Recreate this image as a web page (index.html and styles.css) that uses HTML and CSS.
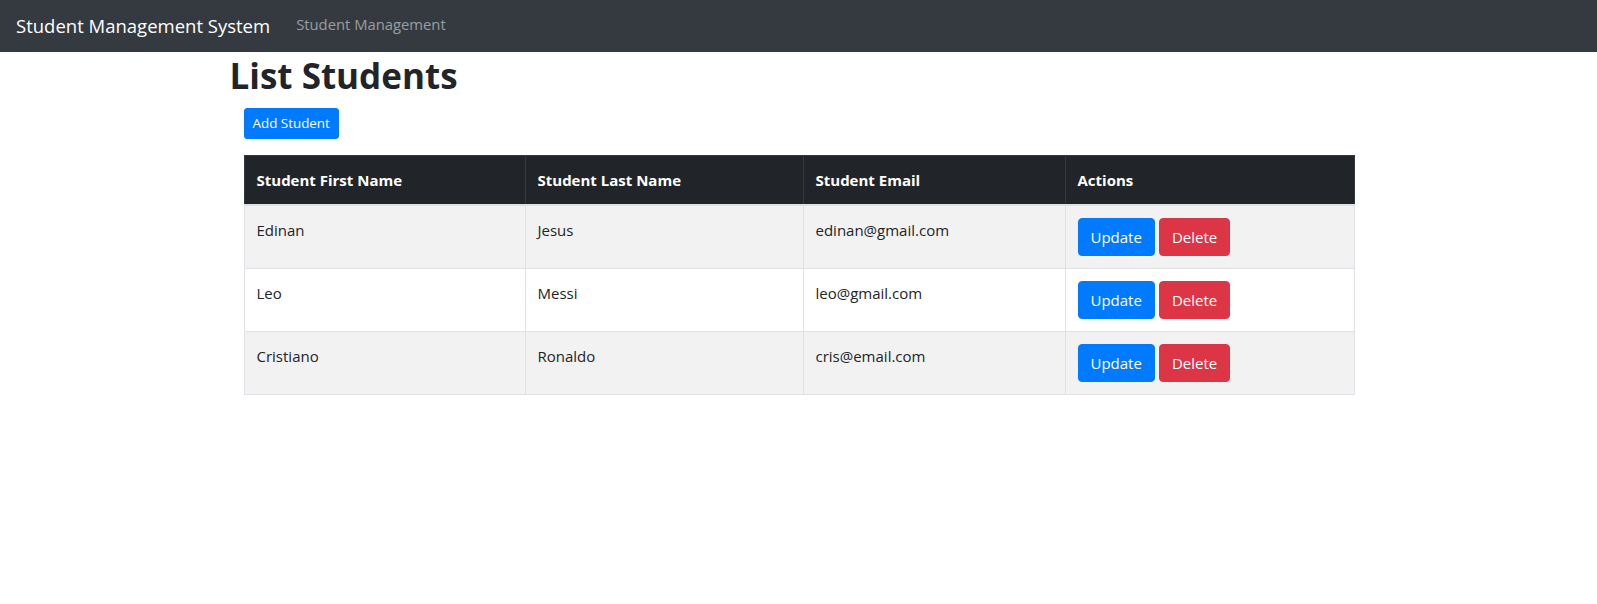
FILE: index.html
```html
<!DOCTYPE html>
<html lang="en">
<head>
<meta charset="utf-8">
<title>Student Management System</title>
<link rel="stylesheet" href="styles.css">
</head>
<body>
<header class="navbar">
  <a class="brand" href="#">Student Management System</a>
  <a class="nav-link" href="#">Student Management</a>
</header>
<main class="container">
  <h1 class="title">List Students</h1>
  <div class="content">
    <div class="toolbar">
      <button class="btn btn-sm btn-primary">Add Student</button>
    </div>
    <table class="table">
      <thead>
        <tr>
          <th class="c1">Student First Name</th>
          <th class="c2">Student Last Name</th>
          <th class="c3">Student Email</th>
          <th class="c4">Actions</th>
        </tr>
      </thead>
      <tbody>
        <tr>
          <td>Edinan</td>
          <td>Jesus</td>
          <td>edinan@gmail.com</td>
          <td><div class="actions"><button class="btn btn-primary">Update</button><button class="btn btn-danger">Delete</button></div></td>
        </tr>
        <tr>
          <td>Leo</td>
          <td>Messi</td>
          <td>leo@gmail.com</td>
          <td><div class="actions"><button class="btn btn-primary">Update</button><button class="btn btn-danger">Delete</button></div></td>
        </tr>
        <tr>
          <td>Cristiano</td>
          <td>Ronaldo</td>
          <td>cris@email.com</td>
          <td><div class="actions"><button class="btn btn-primary">Update</button><button class="btn btn-danger">Delete</button></div></td>
        </tr>
      </tbody>
    </table>
  </div>
</main>
</body>
</html>
```

FILE: styles.css
```css
* { box-sizing: border-box; }

body {
  margin: 0;
  font-family: "Open Sans", "Noto Sans", "Liberation Sans", sans-serif;
  font-size: 15px;
  line-height: 24px;
  color: #212529;
  background: #fff;
}

.navbar {
  display: flex;
  align-items: center;
  height: 52px;
  padding: 0 16px;
  background: #343a40;
}

.brand {
  font-size: 18.5px;
  line-height: 30px;
  color: #fff;
  text-decoration: none;
  margin-right: 18px;
  white-space: nowrap;
}

.nav-link {
  padding: 0 8px 5px;
  font-size: 14.8px;
  line-height: 24px;
  color: rgba(255, 255, 255, 0.5);
  text-decoration: none;
}

.container {
  width: 1140px;
  margin: 0 auto;
}

.title {
  margin: 0 0 8px;
  padding-left: 1px;
  font-size: 35px;
  line-height: 48px;
  font-weight: 700;
  color: #212529;
}

.content {
  padding: 0 15px;
}

.toolbar {
  display: flex;
  margin-bottom: 16px;
}

.btn {
  display: inline-block;
  font-family: inherit;
  font-size: 15px;
  line-height: 24px;
  padding: 6px 12px;
  border: 1px solid transparent;
  border-radius: 4px;
  color: #fff;
  cursor: pointer;
}

.btn-sm {
  font-size: 13.4px;
  line-height: 21px;
  padding: 4px 8px;
  border-radius: 3px;
}

.btn-primary { background: #007bff; border-color: #007bff; }
.btn-danger { background: #dc3545; border-color: #dc3545; }

.table {
  width: 100%;
  border-collapse: collapse;
  table-layout: fixed;
}

.table th,
.table td {
  padding: 12px;
  text-align: left;
  vertical-align: top;
  border: 1px solid #dee2e6;
}

.table thead th {
  background: #212529;
  color: #fff;
  font-weight: 700;
  border-color: #32383e;
  border-bottom: 2px solid #dee2e6;
}

.table tbody tr:nth-child(odd) { background: #f2f2f2; }

.c1 { width: 281px; }
.c2 { width: 278px; }
.c3 { width: 262px; }
.c4 { width: 289px; }

.actions {
  display: flex;
  gap: 4px;
}
```
